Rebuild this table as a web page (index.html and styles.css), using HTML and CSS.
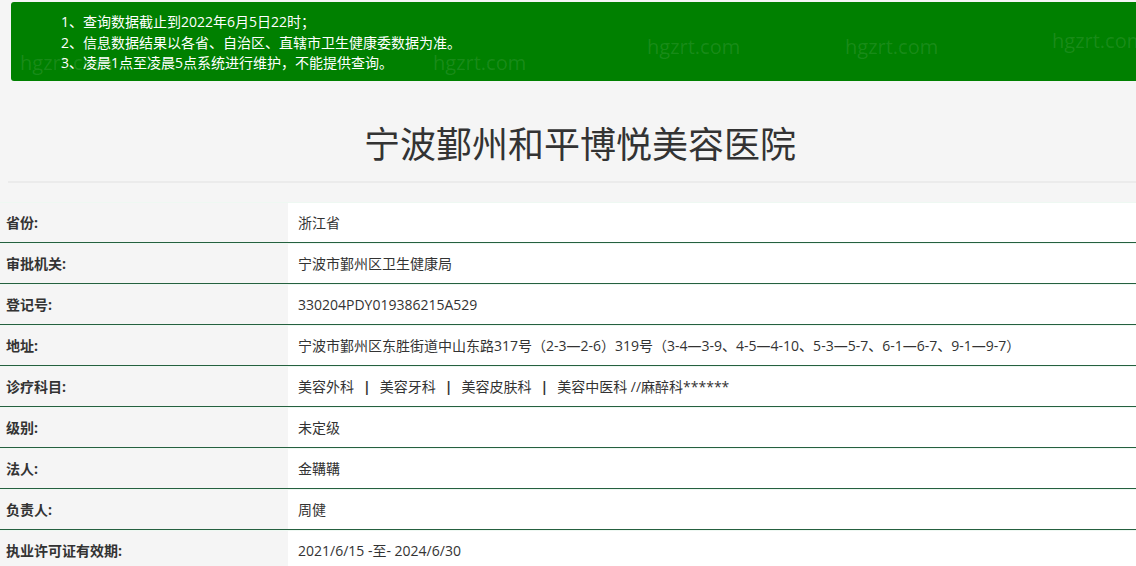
FILE: index.html
```html
<!DOCTYPE html>
<html lang="zh-CN">
<head>
<meta charset="utf-8">
<title>宁波鄞州和平博悦美容医院</title>
<link rel="stylesheet" href="styles.css">
</head>
<body>
<div class="page">
  <div class="notice">
    <span class="wm wm1">hgzrt.com</span>
    <span class="wm wm2">hgzrt.com</span>
    <span class="wm wm3">hgzrt.com</span>
    <span class="wm wm4">hgzrt.com</span>
    <span class="wm wm5">hgzrt.com</span>
    <ol class="notice-list">
      <li>1、查询数据截止到2022年6月5日22时；</li>
      <li>2、信息数据结果以各省、自治区、直辖市卫生健康委数据为准。</li>
      <li>3、凌晨1点至凌晨5点系统进行维护，不能提供查询。</li>
    </ol>
  </div>
  <h1 class="title">宁波鄞州和平博悦美容医院</h1>
  <div class="sep"></div>
  <table class="info">
    <tr><th>省份:</th><td>浙江省</td></tr>
    <tr><th>审批机关:</th><td>宁波市鄞州区卫生健康局</td></tr>
    <tr><th>登记号:</th><td>330204PDY019386215A529</td></tr>
    <tr><th>地址:</th><td>宁波市鄞州区东胜街道中山东路317号（2-3—2-6）319号（3-4—3-9、4-5—4-10、5-3—5-7、6-1—6-7、9-1—9-7）</td></tr>
    <tr><th>诊疗科目:</th><td>美容外科<span class="pipe">|</span>美容牙科<span class="pipe">|</span>美容皮肤科<span class="pipe">|</span>美容中医科 //麻醉科******</td></tr>
    <tr><th>级别:</th><td>未定级</td></tr>
    <tr><th>法人:</th><td>金鞲鞲</td></tr>
    <tr><th>负责人:</th><td>周健</td></tr>
    <tr><th>执业许可证有效期:</th><td>2021/6/15 -至- 2024/6/30</td></tr>
  </table>
</div>
</body>
</html>
```
FILE: styles.css
```css
html, body {
  margin: 0;
  padding: 0;
  background: #f5f5f5;
  font-family: "Open Sans", "Noto Sans CJK SC", sans-serif;
  color: #333;
  overflow: hidden;
}
.page {
  width: 1136px;
  padding-top: 2px;
}
.notice {
  position: relative;
  margin-left: 11px;
  margin-right: -4px;
  height: 79px;
  background: #008000;
  border-radius: 3px;
  overflow: hidden;
}
.notice-list {
  position: relative;
  list-style: none;
  margin: 0;
  padding: 10px 0 0 50px;
  color: #fff;
  font-size: 14px;
  line-height: 20.5px;
}
.wm {
  position: absolute;
  color: rgba(255, 255, 255, 0.1);
  font-size: 20px;
  line-height: 24px;
  font-family: "Open Sans", sans-serif;
  pointer-events: none;
}
.wm1 { left: 9px; top: 49px; }
.wm2 { left: 422px; top: 49px; }
.wm3 { left: 636px; top: 33px; }
.wm4 { left: 834px; top: 33px; }
.wm5 { left: 1041px; top: 27px; }
.title {
  margin: 0;
  padding: 37px 0 0 24px;
  height: 63px;
  text-align: center;
  font-size: 36px;
  font-weight: normal;
  line-height: 48px;
  color: #333;
  font-family: "Noto Sans CJK SC", sans-serif;
}
.sep {
  margin-left: 8px;
  height: 2px;
  background: #ebebeb;
}
.info {
  margin-top: 19px;
  width: 1136px;
  border-collapse: collapse;
  font-size: 14px;
}
.info tr {
  border-bottom: 1px solid #25603f;
}
.info th {
  width: 288px;
  padding: 0 0 0 6px;
  box-sizing: border-box;
  height: 40px;
  text-align: left;
  font-weight: bold;
  color: #333;
  background: #f5f5f5;
  box-shadow: inset 0 1px 0 #eef8f2;
}
.info td {
  padding: 0 0 0 10px;
  height: 40px;
  background: #fff;
  color: #333;
  white-space: nowrap;
  box-shadow: inset 0 1px 0 #eef8f2;
}
.pipe {
  display: inline-block;
  margin: 0 9px;
  font-weight: bold;
}
```
